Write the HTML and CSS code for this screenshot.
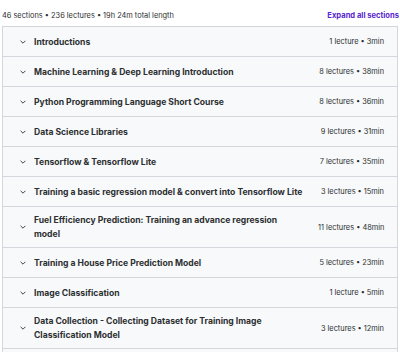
FILE: index.html
```html
<!DOCTYPE html>
<html>
<head>
<meta charset="utf-8">
<link rel="stylesheet" href="styles.css">
</head>
<body>
<div class="page">
  <div class="summary">
    <span class="stats">46 sections • 236 lectures • 19h 24m total length</span>
    <button class="expand">Expand all sections</button>
  </div>
  <div class="curriculum">
    <div class="section"><svg class="chev" viewBox="0 0 10 6"><path d="M1 1l4 4 4-4"/></svg><span class="title">Introductions</span><span class="meta">1 lecture • 3min</span></div>
    <div class="section"><svg class="chev" viewBox="0 0 10 6"><path d="M1 1l4 4 4-4"/></svg><span class="title">Machine Learning &amp; Deep Learning Introduction</span><span class="meta">8 lectures • 38min</span></div>
    <div class="section"><svg class="chev" viewBox="0 0 10 6"><path d="M1 1l4 4 4-4"/></svg><span class="title">Python Programming Language Short Course</span><span class="meta">8 lectures • 36min</span></div>
    <div class="section"><svg class="chev" viewBox="0 0 10 6"><path d="M1 1l4 4 4-4"/></svg><span class="title">Data Science Libraries</span><span class="meta">9 lectures • 31min</span></div>
    <div class="section"><svg class="chev" viewBox="0 0 10 6"><path d="M1 1l4 4 4-4"/></svg><span class="title">Tensorflow &amp; Tensorflow Lite</span><span class="meta">7 lectures • 35min</span></div>
    <div class="section"><svg class="chev" viewBox="0 0 10 6"><path d="M1 1l4 4 4-4"/></svg><span class="title">Training a basic regression model &amp; convert into Tensorflow Lite</span><span class="meta">3 lectures • 15min</span></div>
    <div class="section"><svg class="chev" viewBox="0 0 10 6"><path d="M1 1l4 4 4-4"/></svg><span class="title">Fuel Efficiency Prediction: Training an advance regression model</span><span class="meta">11 lectures • 48min</span></div>
    <div class="section"><svg class="chev" viewBox="0 0 10 6"><path d="M1 1l4 4 4-4"/></svg><span class="title">Training a House Price Prediction Model</span><span class="meta">5 lectures • 23min</span></div>
    <div class="section"><svg class="chev" viewBox="0 0 10 6"><path d="M1 1l4 4 4-4"/></svg><span class="title">Image Classification</span><span class="meta">1 lecture • 5min</span></div>
    <div class="section"><svg class="chev" viewBox="0 0 10 6"><path d="M1 1l4 4 4-4"/></svg><span class="title">Data Collection - Collecting Dataset for Training Image Classification Model</span><span class="meta">3 lectures • 12min</span></div>
    <div class="section section-empty"></div>
  </div>
</div>
</body>
</html>
```
FILE: styles.css
```css
html, body {
  margin: 0;
  padding: 0;
  background: #ffffff;
}
body {
  font-family: Inter, "Liberation Sans", sans-serif;
  color: #2d2f31;
  overflow: hidden;
  height: 352px;
}
.page {
  width: 396px;
  margin-left: 2px;
}
.summary {
  height: 26px;
  display: flex;
  align-items: center;
  justify-content: space-between;
  padding-top: 4px;
  box-sizing: border-box;
}
.stats {
  font-size: 7.4px;
  color: #2d2f31;
}
.expand {
  border: 0;
  background: none;
  padding: 0;
  margin-right: -1px;
  font-family: inherit;
  font-size: 7.6px;
  font-weight: 700;
  color: #5624d0;
}
.curriculum {
  border: 1px solid #d1d7dc;
  border-bottom: 0;
}
.section {
  display: flex;
  align-items: center;
  background: #f7f9fa;
  border-bottom: 1px solid #d1d7dc;
  padding: 6px 13px 6px 17px;
  min-height: 17px;
}
.section-empty {
  height: 30px;
}
.chev {
  width: 6px;
  height: 4px;
  flex: none;
  margin-right: 8px;
  fill: none;
  stroke: #2d2f31;
  stroke-width: 1.5;
}
.title {
  flex: 1;
  font-size: 8.6px;
  font-weight: 700;
  line-height: 14px;
  padding-right: 15px;
}
.meta {
  flex: none;
  width: 66px;
  white-space: nowrap;
  text-align: right;
  font-size: 7.4px;
  color: #2d2f31;
}
```
